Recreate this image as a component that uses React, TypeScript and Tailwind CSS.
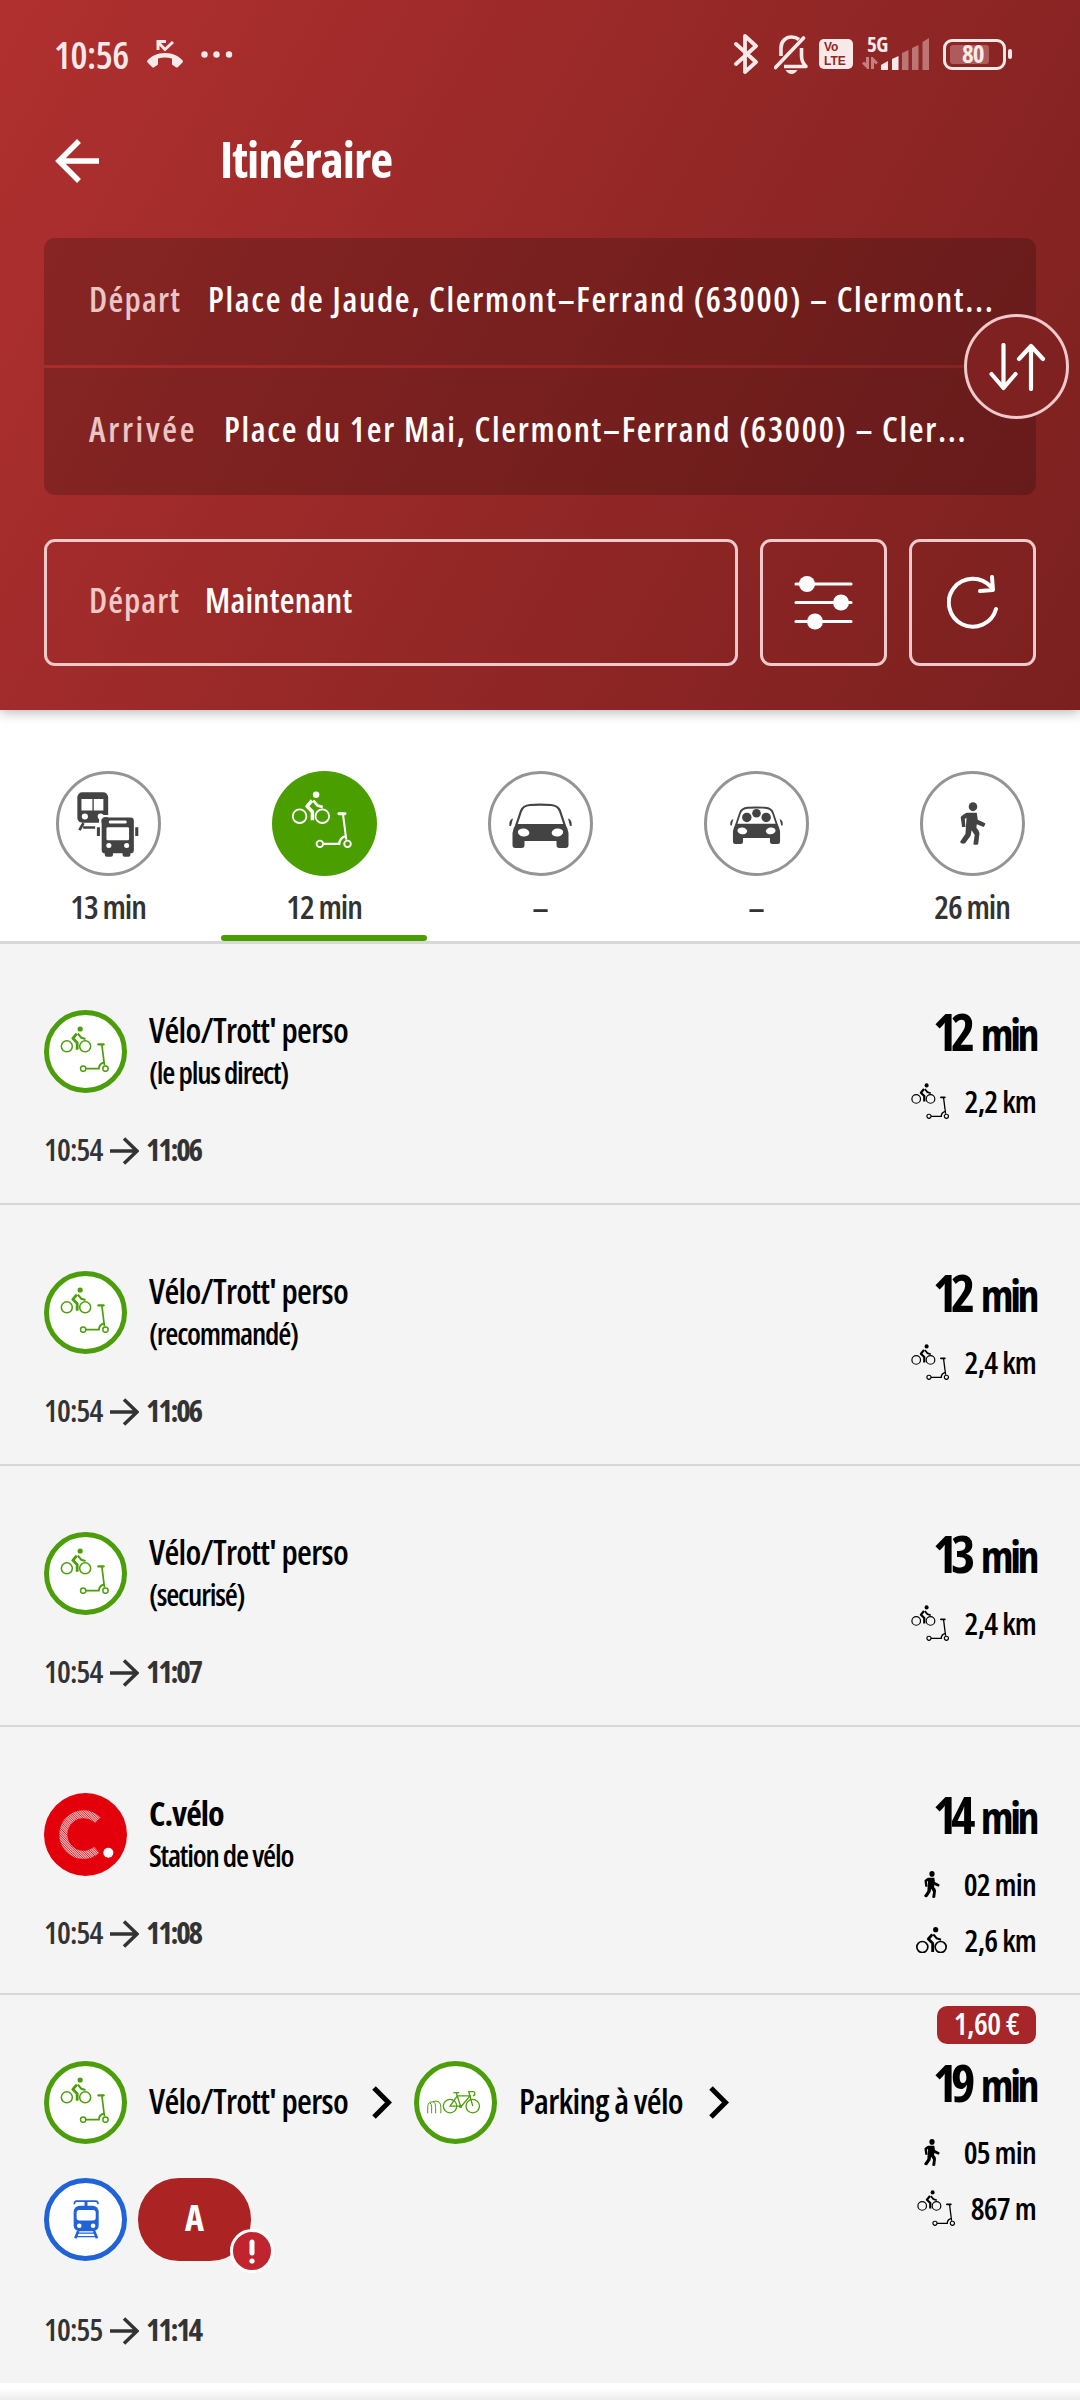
import type { ReactNode } from "react";

interface IconProps {
  className?: string;
}

const BikeScooterIcon = ({ className = "" }: IconProps) => (
  <svg viewBox="176 196 146 138" className={className} fill="none" stroke="currentColor">
    <circle cx="196" cy="257" r="16.5" strokeWidth="4.5" />
    <circle cx="251" cy="257" r="16.5" strokeWidth="4.5" />
    <circle cx="236" cy="205" r="7.8" fill="currentColor" stroke="none" />
    <path d="M226 219L214 233L227 246V267" strokeWidth="8.5" strokeLinejoin="round" />
    <path d="M229 219L239 231L252 235" strokeWidth="6.5" strokeLinejoin="round" />
    <path d="M291 251h15" strokeWidth="7" strokeLinecap="round" />
    <path d="M301 252L309 314" strokeWidth="5" />
    <circle cx="245" cy="324" r="8" strokeWidth="4.5" />
    <circle cx="312" cy="324" r="8" strokeWidth="4.5" />
    <path d="M253 324H292Q293 308 309 305" strokeWidth="5.5" />
  </svg>
);

const BikeIcon = ({ className = "" }: IconProps) => (
  <svg viewBox="177 196 93 78" className={className} fill="none" stroke="currentColor">
    <circle cx="196" cy="256" r="16.5" strokeWidth="5" />
    <circle cx="251" cy="256" r="16.5" strokeWidth="5" />
    <circle cx="236" cy="204" r="7.8" fill="currentColor" stroke="none" />
    <path d="M226 218L214 232L227 245V271" strokeWidth="8.5" strokeLinejoin="round" />
    <path d="M229 218L239 230L252 234" strokeWidth="6.5" strokeLinejoin="round" />
  </svg>
);

const WalkIcon = ({ className = "" }: IconProps) => (
  <svg viewBox="1222 181 76 129" preserveAspectRatio="none" className={className} fill="currentColor">
    <ellipse cx="1260" cy="195" rx="12.5" ry="13.5" />
    <path d="M1241 213H1271L1274 234L1296 245Q1296 252 1291 256L1271 248L1270 259Q1278 265 1279 275L1275 308Q1268 311 1261 308L1265 280L1256 266L1253 282L1237 305Q1227 309 1222 301L1238 276L1241 228L1236 232L1238 256H1228L1224 226Q1230 218 1241 213Z" />
  </svg>
);

const BusTrainIcon = ({ className = "" }: IconProps) => (
  <svg viewBox="225 158 181 194" preserveAspectRatio="none" className={className} fill="currentColor">
    <rect x="226" y="159" width="90" height="91" rx="15" />
    <path d="M238 179h32v34h-32zM274 179h28v34h-28z" fill="white" />
    <circle cx="248" cy="231" r="9" fill="white" />
    <circle cx="294" cy="231" r="8.5" fill="white" />
    <path d="M244 251L232 272M243 264H278" stroke="currentColor" strokeWidth="8" />
    <path d="M293 345V240Q293 230 303 230H320" fill="none" stroke="white" strokeWidth="7" />
    <rect x="297" y="234" width="94" height="107" rx="10" />
    <rect x="306" y="330" width="24" height="21" rx="6" />
    <rect x="358" y="330" width="23" height="21" rx="6" />
    <rect x="318" y="243" width="52" height="9" rx="4" fill="white" />
    <rect x="311" y="263" width="66" height="39" rx="4" fill="white" />
    <circle cx="318" cy="318" r="7.5" fill="white" />
    <circle cx="370" cy="318" r="7.5" fill="white" />
    <path d="M283 263h9v26h-9zM395 263h9v26h-9z" />
  </svg>
);

const CarIcon = ({ className = "", passengers = false }: IconProps & { passengers?: boolean }) => (
  <svg viewBox="509 803 63 45" className={className} fill="currentColor">
    <path d="M516 826L521 811Q523 805.5 530 805Q540 804.3 551 805Q558 805.5 560 811L565 826" fill="none" stroke="currentColor" strokeWidth="2.2" />
    <path d="M516 824H565Q568 828 568.5 833V845Q568.5 848 565.5 848H559.5Q556.5 848 556.5 845V841H524.5V845Q524.5 848 521.5 848H515.5Q512.5 848 512.5 845V833Q513 828 516 824Z" />
    <ellipse cx="523.6" cy="832.5" rx="5.8" ry="4" fill="white" transform="rotate(8 523.6 832.5)" />
    <ellipse cx="557.4" cy="832.5" rx="5.8" ry="4" fill="white" transform="rotate(-8 557.4 832.5)" />
    <path d="M513 818.5Q508.5 820 509.5 826L511 826Z" />
    <path d="M568 818.5Q572.5 820 571.5 826L570 826Z" />
    {passengers && (
      <>
        <circle cx="529" cy="816.5" r="5.6" />
        <circle cx="540.5" cy="811.5" r="5.1" />
        <circle cx="552" cy="816.5" r="5.6" />
      </>
    )}
  </svg>
);

const TramIcon = ({ className = "" }: IconProps) => (
  <svg viewBox="218 536 79 119" className={className} fill="currentColor">
    <path d="M222 551Q222 541 229 541H287Q294 541 294 551" fill="none" stroke="currentColor" strokeWidth="5" />
    <path d="M253 541h9v16h-9z" />
    <rect x="220" y="555" width="76" height="78" rx="18" />
    <rect x="229" y="568" width="58" height="32" rx="8" fill="white" />
    <circle cx="237" cy="616" r="7" fill="white" />
    <circle cx="279" cy="616" r="7" fill="white" />
    <path d="M234 632L225 654M282 632L291 654" stroke="currentColor" strokeWidth="8" />
    <path d="M228 638.5H288M226 649H290" stroke="currentColor" strokeWidth="4" />
  </svg>
);

const BikeParkingIcon = ({ className = "" }: IconProps) => (
  <svg viewBox="140 205 165 73" className={className} fill="none" stroke="currentColor" strokeWidth="4">
    <circle cx="212" cy="254" r="20.5" />
    <circle cx="281" cy="254" r="20.5" />
    <path d="M222 213H240M231 214L244 254H212L234 223H273L245 256" />
    <path d="M281 254L269 210H283Q289 211 287 220L282 223" />
    <circle cx="244" cy="255" r="3" />
    <path d="M144 276V256Q145 240 160 241Q168 243 168 258V276" strokeWidth="3" />
    <path d="M156 276V258Q156 246 150 243M160 240Q184 234 184 258V276" strokeWidth="3" />
  </svg>
);

const CveloLogo = () => (
  <svg viewBox="132 158 249 249" className="size-[83px]">
    <defs>
      <pattern id="hatch" width="5" height="5" patternUnits="userSpaceOnUse" patternTransform="rotate(45)">
        <rect width="5" height="5" fill="#e8262d" />
        <rect width="5" height="2.5" fill="#fbd0d2" />
      </pattern>
    </defs>
    <circle cx="256.5" cy="282.5" r="124.5" fill="#e4000b" />
    <path d="M293 240A60 61 0 1 0 290 328" fill="none" stroke="url(#hatch)" strokeWidth="24" />
    <circle cx="325" cy="337" r="15" fill="white" />
  </svg>
);

const ArrowIcon = () => (
  <svg viewBox="0 0 29 28" className="mx-[7px] h-7 w-[29px]" fill="none" stroke="#333" strokeWidth="3.5">
    <path d="M0 14H27M14 1.5L27 14L14 26.5" />
  </svg>
);

const ChevronIcon = ({ className = "" }: IconProps) => (
  <svg viewBox="0 0 20 33" className={`h-[33px] w-5 ${className}`} fill="none" stroke="black" strokeWidth="5">
    <path d="M2 2L16.5 16.5L2 31" />
  </svg>
);

const StatusBar = () => (
  <div className="flex h-[108px] items-center justify-between pr-6 pl-2.5 text-[#f9e9e9]">
    <div className="flex items-center">
      <span className="w-[76px] text-[38px] leading-none font-semibold tracking-[-0.5px] whitespace-nowrap">10:56</span>
      <svg viewBox="147 42 36 28" className="ml-[17px] h-7 w-9" fill="currentColor">
        <path d="M165 55C157 55 151 58 147 63Q147 64 148 65L152 69Q153 70 154.5 69L158 66.5V60.5Q165 58.5 172 60.5V66.5L175.5 69Q177 70 178 69L182 65Q183 64 183 63C179 58 173 55 165 55Z" />
        <path d="M158 52V43.5H166M158 44L165 51.5L173 44" fill="none" stroke="currentColor" strokeWidth="3" />
      </svg>
      <svg viewBox="0 0 32 7" className="ml-[18px] h-[7px] w-8" fill="currentColor">
        <circle cx="3.5" cy="3.5" r="3.2" />
        <circle cx="15.5" cy="3.5" r="3.2" />
        <circle cx="28" cy="3.5" r="3.2" />
      </svg>
    </div>
    <div className="flex items-center">
      <svg viewBox="734 36 25 41" className="mr-[15px] h-[41px] w-[25px]" fill="none" stroke="currentColor" strokeWidth="3.8" strokeLinejoin="round" strokeLinecap="round">
        <path d="M736 46L756 64L745 74V38L756 48L736 66" />
      </svg>
      <svg viewBox="774 37 35 39" className="mr-2.5 h-[39px] w-[35px]" fill="none" stroke="currentColor" strokeWidth="3.6" strokeLinecap="round">
        <path d="M775.5 69.5L803.5 40" />
        <path d="M781 58V50C781 43 786 39 791.5 39Q796 39 799 41.5" strokeLinecap="butt" />
        <path d="M784 68.5H806Q801.5 64 801.5 58V50" strokeLinejoin="round" strokeLinecap="butt" />
        <path d="M785.5 72H797.5Q795 76 791.5 76T785.5 72Z" fill="currentColor" stroke="none" />
      </svg>
      <div className="mr-[9px] flex h-[30px] w-[34px] flex-col rounded-[5px] bg-[#f9e9e9] pt-[1px] pl-[5px] font-['Liberation_Sans'] text-[12px] leading-[14px] font-bold text-[#8e2625]">
        <span>Vo</span>
        <span>LTE</span>
      </div>
      <div className="mr-3.5 flex h-[38px] w-[67px]">
        <div className="flex w-[19px] flex-col">
          <span className="pl-[5px] text-[21px] leading-[19px] font-bold tracking-[-0.5px]">5G</span>
          <svg viewBox="0 0 16 12" className="mt-[3px] h-3 w-4 shrink-0" fill="none" stroke="#c57f7f" strokeWidth="3">
            <path d="M5.5 0V10L1 5.5M10.5 12V2L15 6.5" />
          </svg>
        </div>
        <svg viewBox="881 38 48 38" className="h-[38px] w-12 overflow-visible" fill="currentColor">
          <path d="M881 68L888 64V73H881ZM892 62L898.5 59V73H892Z" />
          <path d="M902 56L908.5 53V73H902ZM912 51L918.5 48V73H912ZM922.5 45L929 41V73H922.5Z" fill="#bd7574" />
        </svg>
      </div>
      <div className="flex h-[31px] w-[63px] items-center rounded-[9px] border-3 border-current p-1">
        <div className="relative h-[19px] w-[39px] rounded-[3px] bg-[#ad5c5b]">
          <span className="absolute -top-[1px] left-[12px] text-[25px] leading-[19px] font-bold tracking-[-1px]">80</span>
        </div>
      </div>
      <div className="ml-0.5 h-2.5 w-1 rounded-sm bg-current" />
    </div>
  </div>
);

interface PlaceRowProps {
  label: string;
  value: string;
  className: string;
  labelClassName: string;
}

const PlaceRow = ({ label, value, className, labelClassName }: PlaceRowProps) => (
  <div className={`flex h-[127px] items-center bg-black/20 pb-[5px] pl-[45px] text-[34px] leading-none font-semibold whitespace-nowrap ${className}`}>
    <span className={`text-[#e9c5c5] ${labelClassName}`}>{label}</span>
    <span className="tracking-[1.7px] text-white">{value}</span>
  </div>
);

const Header = () => (
  <header className="relative z-10 h-[710px] shrink-0 bg-[linear-gradient(120deg,#b0302f,#7a201f)] px-11 shadow-[0_2px_12px_rgba(0,0,0,0.3)]">
    <StatusBar />
    <div className="mb-6 flex h-[106px] items-center pl-[11px] text-white">
      <svg viewBox="55 139 44 44" className="size-11" fill="none" stroke="currentColor" strokeWidth="5.5">
        <path d="M99 161H60M79 141L59 161L79 181" />
      </svg>
      <h1 className="mb-1 ml-[121px] text-[50px] leading-none font-bold tracking-[-1px]">Itinéraire</h1>
    </div>
    <div className="relative flex flex-col gap-[3px]">
      <PlaceRow
        className="rounded-t-[11px]"
        labelClassName="w-[119px] tracking-[1.2px]"
        label="Départ"
        value="Place de Jaude, Clermont–Ferrand (63000) – Clermont..."
      />
      <PlaceRow
        className="rounded-b-[11px]"
        labelClassName="w-[135px] tracking-[2.7px]"
        label="Arrivée"
        value="Place du 1er Mai, Clermont–Ferrand (63000) – Cler..."
      />
      <button className="absolute top-[76px] right-[-33px] flex size-[105px] items-center justify-center rounded-full border-3 border-[#f0caca] bg-[#7e2120] text-white">
        <svg viewBox="988 343 56 48" className="h-12 w-14" fill="none" stroke="currentColor" strokeWidth="4.2" strokeLinecap="round" strokeLinejoin="round">
          <path d="M1002.5 345V388M990.5 374L1002.5 388L1014.5 374M1030 389V346M1018 359L1030 346L1042 359" />
        </svg>
      </button>
    </div>
    <div className="mt-11 flex gap-[22px] text-white">
      <div className="flex h-[127px] w-[694px] items-center rounded-[11px] border-3 border-[#f0caca] pb-[5px] pl-[42px] text-[34px] leading-none font-semibold">
        <span className="w-[116px] tracking-[1px] text-[#efc8c8]">Départ</span>
        <span className="tracking-[0.2px]">Maintenant</span>
      </div>
      <button className="flex h-[127px] w-[127px] items-center justify-center rounded-[11px] border-3 border-[#f0caca]">
        <svg viewBox="794 575 59 55" className="h-[55px] w-[59px]" fill="currentColor">
          <path d="M796 584H851M796 602.5H851M796 621.5H851" stroke="currentColor" strokeWidth="3.2" strokeLinecap="round" />
          <circle cx="807" cy="584" r="8" />
          <circle cx="841" cy="602.5" r="8" />
          <circle cx="815" cy="621.5" r="8" />
        </svg>
      </button>
      <button className="flex h-[127px] w-[127px] items-center justify-center rounded-[11px] border-3 border-[#f0caca]">
        <svg viewBox="947 574 52 56" className="h-[56px] w-[52px]" fill="none" stroke="currentColor" strokeWidth="4" strokeLinecap="round" strokeLinejoin="round">
          <path d="M996 608A24 24 0 1 1 991 586M980 590L993 589L992 576" />
        </svg>
      </button>
    </div>
  </header>
);

interface ModeTabProps {
  label: string;
  active?: boolean;
  children: ReactNode;
}

const ModeTab = ({ label, active = false, children }: ModeTabProps) => (
  <div className="flex w-[216px] flex-col items-center pt-[61px]">
    <div
      className={`flex size-[105px] items-center justify-center rounded-full ${
        active ? "bg-[#4b9e00] text-white" : "border-3 border-[#949494] bg-white text-[#434343]"
      }`}
    >
      {children}
    </div>
    <span className="mt-3 flex h-[47px] items-center pb-2.5 text-[33px] leading-none font-semibold tracking-[-1.1px] text-[#333]">{label}</span>
    {active && <div className="h-1.5 w-[206px] rounded-full bg-[#4b9e00]" />}
  </div>
);

const ModeTabs = () => (
  <nav className="flex h-[234px] shrink-0 border-b-3 border-[#d8d8d8] bg-white">
    <ModeTab label="13 min">
      <BusTrainIcon className="mt-[1px] h-[65px] w-[62px]" />
    </ModeTab>
    <ModeTab label="12 min" active>
      <BikeScooterIcon className="mr-[6px] mb-[9px] h-[57px] w-[61px]" />
    </ModeTab>
    <ModeTab label="–">
      <CarIcon className="mt-1 h-[45px] w-[63px]" />
    </ModeTab>
    <ModeTab label="–">
      <CarIcon className="mt-0.5 h-[38px] w-[53px]" passengers />
    </ModeTab>
    <ModeTab label="26 min">
      <WalkIcon className="ml-[2px] h-[43px] w-[26px]" />
    </ModeTab>
  </nav>
);

const ModeBadge = ({ className = "border-[#4b9e0a] text-[#4b9e0a]", children }: { className?: string; children: ReactNode }) => (
  <div className={`flex size-[83px] shrink-0 items-center justify-center rounded-full border-5 bg-white ${className}`}>
    {children}
  </div>
);

const BikeScooterBadge = () => (
  <ModeBadge>
    <BikeScooterIcon className="mr-[3px] mb-[6px] h-[46px] w-[49px]" />
  </ModeBadge>
);

const Times = ({ from, to }: { from: string; to: string }) => (
  <div className="flex h-8 items-center text-[31px] leading-none text-[#333]">
    <span className="mb-[3px] w-[59px] font-semibold tracking-[-0.9px]">{from}</span>
    <ArrowIcon />
    <span className="mb-[3px] font-bold tracking-[-2.3px]">{to}</span>
  </div>
);

interface Detail {
  icon: "walk" | "bike" | "scooter";
  text: string;
}

const DetailRow = ({ icon, text }: Detail) => (
  <div className="flex h-14 items-center text-[31px] leading-none font-semibold tracking-[-0.8px] whitespace-nowrap">
    {icon === "walk" && <WalkIcon className="mr-6 h-[27px] w-4" />}
    {icon === "bike" && <BikeIcon className="mr-[18px] h-[26px] w-[31px]" />}
    {icon === "scooter" && <BikeScooterIcon className="mr-4 h-9 w-[38px]" />}
    <span>{text}</span>
  </div>
);

const Summary = ({ minutes, details, price }: { minutes: string; details: Detail[]; price?: string }) => (
  <div className="flex flex-col items-end">
    <div className="flex h-[61px] items-start pt-[11px]">
      {price && (
        <span className="flex h-[38px] w-[99px] items-center justify-center rounded-[10px] bg-[#a7262a] pb-[3px] text-[31px] leading-none font-semibold tracking-[-0.5px] text-white">
          {price}
        </span>
      )}
    </div>
    <div className="mb-4 flex h-[52px] items-baseline leading-none font-bold whitespace-nowrap">
      <span className="mr-3 text-[52px] tracking-[-6.5px]">{minutes}</span>
      <span className="text-[44px] tracking-[-3.5px]">min</span>
    </div>
    {details.map((detail) => (
      <DetailRow key={detail.text} {...detail} />
    ))}
  </div>
);

interface RouteItemProps {
  badge: ReactNode;
  title: string;
  subtitle: string;
  from: string;
  to: string;
  minutes: string;
  details: Detail[];
  bold?: boolean;
}

const RouteItem = ({ badge, title, subtitle, from, to, minutes, details, bold = false }: RouteItemProps) => (
  <div className={`flex shrink-0 justify-between border-b-2 border-[#d6d8d8] px-11 ${bold ? "h-[268px]" : "h-[261px]"}`}>
    <div className="pt-[66px]">
      <div className="mb-[42px] flex">
        {badge}
        <div className="ml-[22px] whitespace-nowrap">
          <p className={`flex h-10 items-center text-[34px] leading-none ${bold ? "font-bold tracking-[-1px]" : "font-semibold tracking-[-0.7px]"}`}>{title}</p>
          <p className="mt-[3px] flex h-10 items-center text-[30px] leading-none font-semibold tracking-[-1.2px]">{subtitle}</p>
        </div>
      </div>
      <Times from={from} to={to} />
    </div>
    <Summary minutes={minutes} details={details} />
  </div>
);

const routes: RouteItemProps[] = [
  {
    badge: <BikeScooterBadge />,
    title: "Vélo/Trott' perso",
    subtitle: "(le plus direct)",
    from: "10:54",
    to: "11:06",
    minutes: "12",
    details: [{ icon: "scooter", text: "2,2 km" }],
  },
  {
    badge: <BikeScooterBadge />,
    title: "Vélo/Trott' perso",
    subtitle: "(recommandé)",
    from: "10:54",
    to: "11:06",
    minutes: "12",
    details: [{ icon: "scooter", text: "2,4 km" }],
  },
  {
    badge: <BikeScooterBadge />,
    title: "Vélo/Trott' perso",
    subtitle: "(securisé)",
    from: "10:54",
    to: "11:07",
    minutes: "13",
    details: [{ icon: "scooter", text: "2,4 km" }],
  },
  {
    badge: <CveloLogo />,
    title: "C.vélo",
    subtitle: "Station de vélo",
    from: "10:54",
    to: "11:08",
    minutes: "14",
    details: [
      { icon: "walk", text: "02 min" },
      { icon: "bike", text: "2,6 km" },
    ],
    bold: true,
  },
];

const MixedRoute = () => (
  <div className="flex h-[388px] shrink-0 justify-between px-11">
    <div className="pt-[66px]">
      <div className="flex items-center text-[34px] leading-none font-semibold tracking-[-0.7px] whitespace-nowrap">
        <BikeScooterBadge />
        <span className="mb-1 ml-[22px] w-[201px]">Vélo/Trott' perso</span>
        <ChevronIcon className="mx-[22px]" />
        <ModeBadge>
          <BikeParkingIcon className="mr-1 mb-0.5 h-6 w-[55px]" />
        </ModeBadge>
        <span className="mb-1 ml-[22px] w-[168px]">Parking à vélo</span>
        <ChevronIcon className="ml-[22px]" />
      </div>
      <div className="mt-[34px] mb-[54px] flex gap-[11px]">
        <ModeBadge className="border-[#2062d8] text-[#2062d8]">
          <TramIcon className="mb-[2px] h-[40px] w-[26px]" />
        </ModeBadge>
        <div className="relative flex h-[83px] w-[113px] items-center justify-center rounded-[41px] bg-[#ab2423] pb-1 text-[36px] font-bold text-white">
          A
          <svg viewBox="0 0 44 44" className="absolute -right-[23px] -bottom-3 size-11">
            <circle cx="22" cy="22" r="20.5" fill="#c0242f" stroke="white" strokeWidth="3" />
            <path d="M22 13V24" stroke="white" strokeWidth="5" strokeLinecap="round" />
            <circle cx="22" cy="32" r="2.6" fill="white" />
          </svg>
        </div>
      </div>
      <Times from="10:55" to="11:14" />
    </div>
    <Summary
      price="1,60 €"
      minutes="19"
      details={[
        { icon: "walk", text: "05 min" },
        { icon: "scooter", text: "867 m" },
      ]}
    />
  </div>
);

export default function App() {
  return (
    <div className="flex h-[2400px] w-[1080px] flex-col overflow-hidden bg-white font-['Open_Sans',sans-serif] text-black [font-stretch:75%]">
      <Header />
      <ModeTabs />
      <main className="flex flex-col bg-[#f4f4f4]">
        {routes.map((route) => (
          <RouteItem key={route.subtitle} {...route} />
        ))}
        <MixedRoute />
      </main>
      <div className="mt-1.5 flex-1 bg-linear-to-b from-white to-[#ececec]" />
    </div>
  );
}
